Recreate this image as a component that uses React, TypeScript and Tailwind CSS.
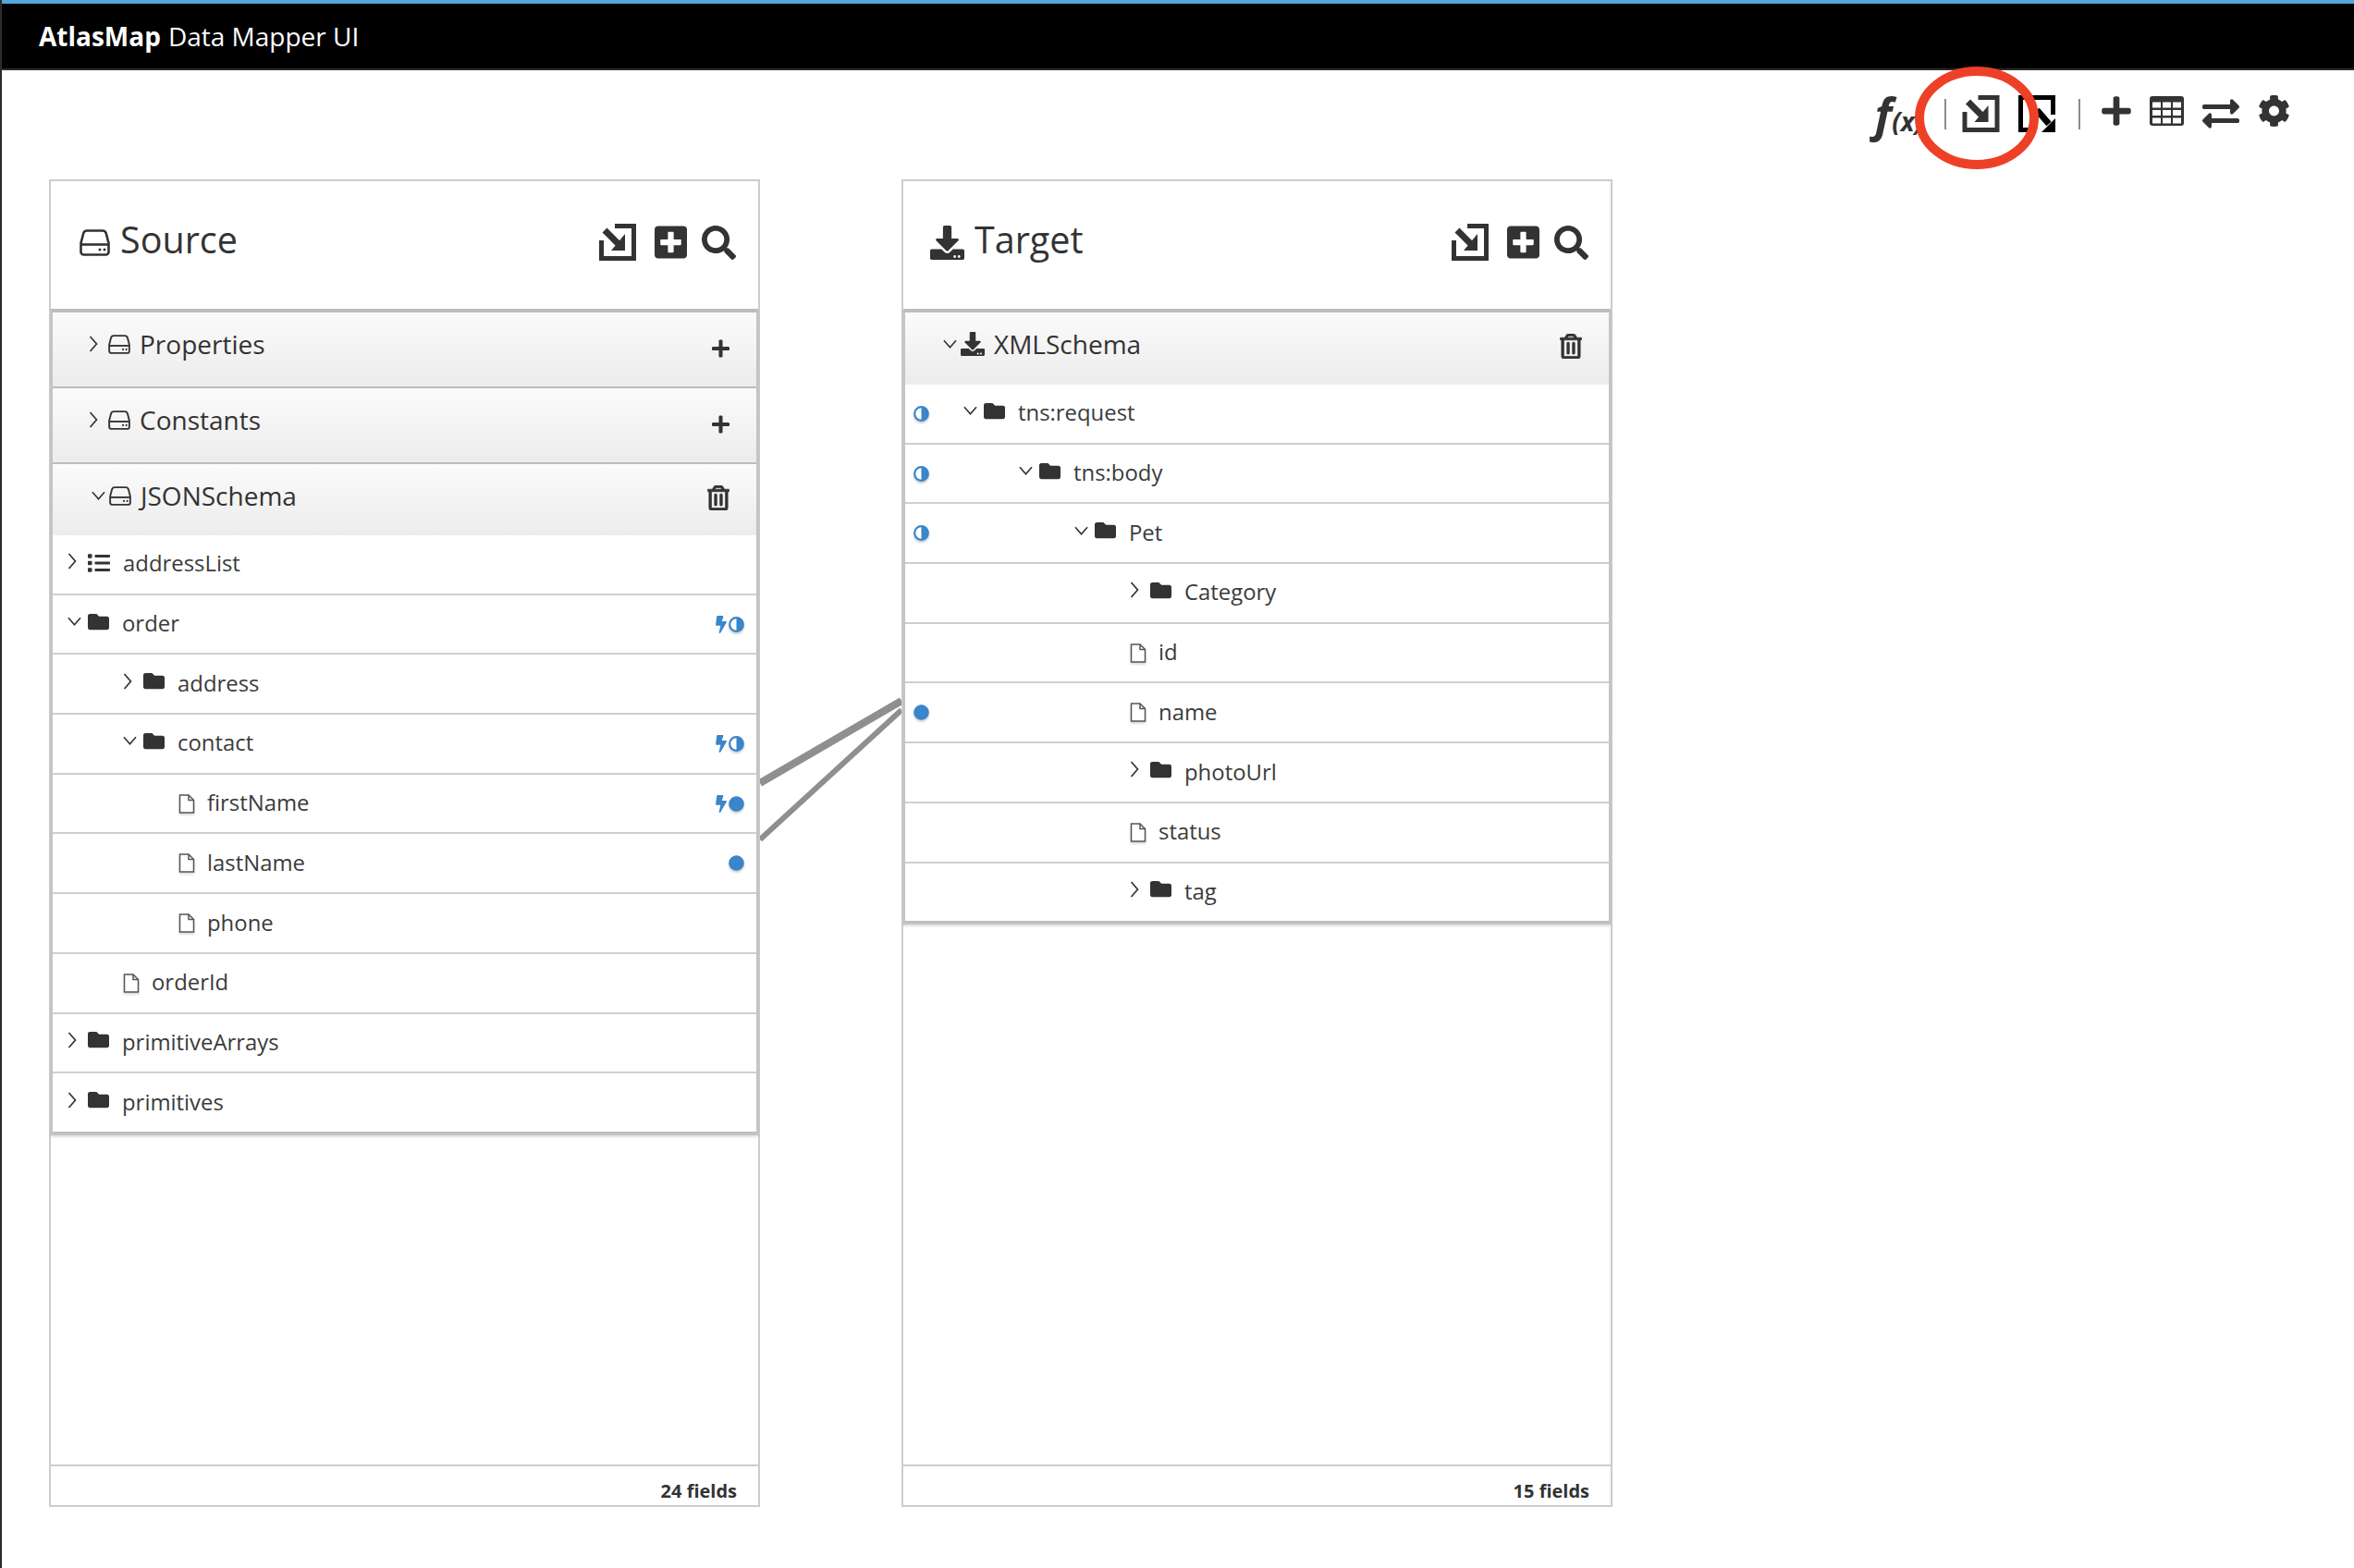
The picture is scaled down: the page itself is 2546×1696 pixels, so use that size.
import React from "react";
import {
  FaBolt,
  FaCircle,
  FaCog,
  FaDownload,
  FaExchangeAlt,
  FaFolder,
  FaList,
  FaPlus,
  FaPlusSquare,
  FaRegTrashAlt,
  FaSearch,
} from "react-icons/fa";

type Row = {
  label: string;
  depth: 0 | 1 | 2 | 3;
  kind: "folder" | "file" | "list";
  open?: boolean;
  link?: "half" | "full";
  bolt?: boolean;
};

const sourceRows: Row[] = [
  { label: "addressList", depth: 0, kind: "list" },
  { label: "order", depth: 0, kind: "folder", open: true, link: "half", bolt: true },
  { label: "address", depth: 1, kind: "folder" },
  { label: "contact", depth: 1, kind: "folder", open: true, link: "half", bolt: true },
  { label: "firstName", depth: 2, kind: "file", link: "full", bolt: true },
  { label: "lastName", depth: 2, kind: "file", link: "full" },
  { label: "phone", depth: 2, kind: "file" },
  { label: "orderId", depth: 1, kind: "file" },
  { label: "primitiveArrays", depth: 0, kind: "folder" },
  { label: "primitives", depth: 0, kind: "folder" },
];

const targetRows: Row[] = [
  { label: "tns:request", depth: 0, kind: "folder", open: true, link: "half" },
  { label: "tns:body", depth: 1, kind: "folder", open: true, link: "half" },
  { label: "Pet", depth: 2, kind: "folder", open: true, link: "half" },
  { label: "Category", depth: 3, kind: "folder" },
  { label: "id", depth: 3, kind: "file" },
  { label: "name", depth: 3, kind: "file", link: "full" },
  { label: "photoUrl", depth: 3, kind: "folder" },
  { label: "status", depth: 3, kind: "file" },
  { label: "tag", depth: 3, kind: "folder" },
];

const indent = ["w-0", "w-[60px]", "w-[120px]", "w-[180px]"];

function Chevron({ open }: { open?: boolean }) {
  if (open) {
    return (
      <svg viewBox="0 0 16 10" className="h-[10px] w-[15px]" fill="none" stroke="#333" strokeWidth="1.7">
        <path d="M1 1l7 8 7-8" />
      </svg>
    );
  }
  return (
    <svg viewBox="0 0 10 18" className="h-[18px] w-[10px]" fill="none" stroke="#333" strokeWidth="1.7">
      <path d="M1.5 1l7 8-7 8" />
    </svg>
  );
}

function HddIcon({ className }: { className: string }) {
  return (
    <svg viewBox="0 0 33 29" className={className}>
      <path
        d="M8 1.5H25a4 4 0 0 1 3.8 3L31.5 15V24.5a3 3 0 0 1-3 3H4.5a3 3 0 0 1-3-3V15L4.2 4.5A4 4 0 0 1 8 1.5z"
        fill="none"
        stroke="#333"
        strokeWidth="2.6"
      />
      <path d="M1.5 16.5H31.5" fill="none" stroke="#333" strokeWidth="2.6" />
      <circle cx="22" cy="22" r="1.5" fill="#333" />
      <circle cx="27" cy="22" r="1.5" fill="#333" />
    </svg>
  );
}

function FileIcon() {
  return (
    <svg viewBox="0 0 18 21" className="h-[21px] w-[18px] shrink-0 drop-shadow-[0_2px_1px_rgba(0,0,0,0.15)]">
      <path d="M1.5 1H11L16.5 6.5V20H1.5z" fill="#fff" stroke="#555" strokeWidth="1.5" />
      <path d="M11 1V6.5H16.5" fill="none" stroke="#555" strokeWidth="1.5" />
    </svg>
  );
}

function MappedIcon({ className }: { className: string }) {
  return (
    <svg viewBox="0 0 40 40" className={className}>
      <path d="M17 2.5H37.5V37.5H2.5V18" fill="none" stroke="#333" strokeWidth="5" />
      <path d="M6 7L22 23" fill="none" stroke="#333" strokeWidth="7" />
      <path d="M28 11V29H13z" fill="#333" />
    </svg>
  );
}

function UnmappedIcon({ className }: { className: string }) {
  return (
    <svg viewBox="0 0 40 40" className={className}>
      <path d="M37.5 21V2.5H2.5V37.5H14" fill="none" stroke="#000" strokeWidth="5" />
      <path d="M20 16L33 31" fill="none" stroke="#000" strokeWidth="7" />
      <path d="M40 25V40H25z" fill="#000" />
    </svg>
  );
}

function TableIcon() {
  return (
    <svg viewBox="0 0 37 32" className="h-[32px] w-[37px] -translate-y-[3px]">
      <rect width="37" height="32" rx="3" fill="#333" />
      {[6.5, 15, 23.5].map((y) =>
        [3, 14, 25].map((x) => <rect key={`${x}-${y}`} x={x} y={y} width="9" height="6" fill="#fff" />)
      )}
    </svg>
  );
}

function LinkDot({ kind }: { kind: "half" | "full" }) {
  if (kind === "full") {
    return <FaCircle className="h-[17px] w-[17px] text-[#3a85cb] drop-shadow-[0_2px_1px_rgba(0,0,0,0.2)]" />;
  }
  return (
    <svg viewBox="0 0 17 17" className="h-[17px] w-[17px] drop-shadow-[0_2px_1px_rgba(0,0,0,0.2)]">
      <circle cx="8.5" cy="8.5" r="7.3" fill="#fff" stroke="#3a85cb" strokeWidth="2.2" />
      <path d="M8.5 1.2a7.3 7.3 0 0 1 0 14.6z" fill="#3a85cb" />
    </svg>
  );
}

function TreeRow({ row, target, last }: { row: Row; target?: boolean; last?: boolean }) {
  return (
    <div
      className={`flex h-[64.7px] items-center border-b-2 text-[23.9px] text-[#3b3b3b] ${
        last ? "border-[#bdbdbd]" : "border-[#cfcfcf]"
      }`}
    >
      {target ? (
        <div className="flex w-[63px] shrink-0 pl-[9px]">{row.link && <LinkDot kind={row.link} />}</div>
      ) : (
        <div className="w-[16px] shrink-0" />
      )}
      <div className={`shrink-0 ${indent[row.depth]}`} />
      {row.kind === "file" ? (
        <div className="flex items-center gap-[13px]">
          <FileIcon />
          <span className="-translate-y-[1px]">{row.label}</span>
        </div>
      ) : (
        <div className="flex items-center">
          <div className="flex w-[22px] shrink-0 -translate-y-[3px] items-center">
            <Chevron open={row.open} />
          </div>
          {row.kind === "folder" ? (
            <FaFolder className="h-[23px] w-[23px] -translate-y-[3px] text-[#333]" />
          ) : (
            <FaList className="h-[24px] w-[24px] -translate-y-[1px] text-[#333]" />
          )}
          <span className="ml-[14px] -translate-y-[1px]">{row.label}</span>
        </div>
      )}
      {!target && (row.link || row.bolt) && (
        <div className="ml-auto flex items-center gap-[2px] pr-[13px]">
          {row.bolt && <FaBolt className="h-[19px] w-[12px] text-[#3a85cb]" />}
          {row.link && <LinkDot kind={row.link} />}
        </div>
      )}
    </div>
  );
}

function SectionHeader({
  label,
  icon,
  open,
  action,
  height,
  border,
  pad,
}: {
  label: string;
  icon: React.ReactNode;
  open?: boolean;
  action: React.ReactNode;
  height: string;
  border?: boolean;
  pad: string;
}) {
  return (
    <div
      className={`flex items-start bg-gradient-to-b from-[#fbfbfb] to-[#ececec] ${height} ${pad} pt-[15px] pr-[29px] ${
        border ? "border-b-2 border-[#bdbdbd]" : ""
      }`}
    >
      <div className="flex items-center text-[28px] leading-[38px] text-[#333]">
        <div className={`flex shrink-0 items-center ${open ? "w-[19px]" : "w-[21px]"}`}>
          <Chevron open={open} />
        </div>
        {icon}
        <span className="ml-[10px]">{label}</span>
      </div>
      <div className="ml-auto flex pt-[8px]">{action}</div>
    </div>
  );
}

function Panel({
  title,
  titleIcon,
  fields,
  children,
}: {
  title: string;
  titleIcon: React.ReactNode;
  fields: string;
  children: React.ReactNode;
}) {
  return (
    <div className="flex h-[1436px] w-[769px] shrink-0 flex-col border-2 border-[#cccccc]">
      <div className="flex h-[138px] shrink-0 items-center pr-[24px] pb-[6px] pl-[31px]">
        {titleIcon}
        <span className="ml-[11px] -translate-y-[2px] text-[39.5px] leading-none text-[#333]">{title}</span>
        <div className="ml-auto flex items-center gap-[16px]">
          <MappedIcon className="mr-[4px] h-[40px] w-[40px]" />
          <FaPlusSquare className="h-[40px] w-[35px] text-[#333]" />
          <FaSearch className="h-[37px] w-[37px] text-[#333]" />
        </div>
      </div>
      <div className="border-x-2 border-t-4 border-b-2 border-[#c4c4c4] border-t-[#bdbdbd] shadow-[0_2px_2px_rgba(0,0,0,0.12)]">
        {children}
      </div>
      <div className="mt-auto flex h-[44px] shrink-0 items-center justify-end border-t-2 border-[#cccccc] pt-[12px] pr-[23px] text-[20px] font-bold text-[#333]">
        {fields}
      </div>
    </div>
  );
}

function App() {
  const trash = <FaRegTrashAlt className="h-[27px] w-[24px] text-[#333] [stroke-width:14px]" />;
  const plus = <FaPlus className="mt-[5px] h-[22px] w-[19px] text-[#333]" />;
  const smallHdd = <HddIcon className="h-[21px] w-[24px]" />;

  return (
    <div className="relative min-h-screen border-l-2 border-[#2b2b2b] bg-white font-['Open_Sans','Noto_Sans',sans-serif]">
      <header className="flex h-[76px] items-center border-t-4 border-b-2 border-t-[#57a5d9] border-b-[#2b2b2b] bg-black pl-[40px] text-[28px] text-white">
        <span className="font-bold">AtlasMap</span>
        <span className="ml-[8px]">Data Mapper UI</span>
      </header>

      <div className="mb-[24px] flex h-[94px] items-center justify-end gap-[20px] pr-[69px]">
        <div className="flex items-baseline font-bold text-[#333] italic">
          <span className="text-[50px] leading-none">f</span>
          <span className="text-[28px] leading-none">(x)</span>
        </div>
        <div className="ml-[3px] h-[33px] w-[2px] bg-[#8c8c8c]" />
        <MappedIcon className="-ml-[3px] h-[40px] w-[41px]" />
        <UnmappedIcon className="h-[40px] w-[40px]" />
        <div className="ml-[5px] h-[33px] w-[2px] bg-[#8c8c8c]" />
        <FaPlus className="ml-[3px] h-[36px] w-[32px] -translate-y-[3px] text-[#333]" />
        <TableIcon />
        <FaExchangeAlt className="h-[40px] w-[40px] text-[#333]" />
        <FaCog className="h-[36px] w-[35px] -translate-y-[3px] text-[#333]" />
      </div>

      <div className="flex pl-[51px]">
        <Panel title="Source" titleIcon={<HddIcon className="h-[29px] w-[33px]" />} fields="24 fields">
          <SectionHeader label="Properties" icon={smallHdd} action={plus} height="h-[82px]" pad="pl-[39px]" border />
          <SectionHeader label="Constants" icon={smallHdd} action={plus} height="h-[82px]" pad="pl-[39px]" border />
          <SectionHeader label="JSONSchema" icon={smallHdd} action={trash} open height="h-[77px]" pad="pl-[42px]" />
          {sourceRows.map((row, i) => (
            <TreeRow key={row.label} row={row} last={i === sourceRows.length - 1} />
          ))}
        </Panel>

        <div className="w-[153px] shrink-0">
          <svg viewBox="0 0 153 170" className="mt-[556px] h-[170px] w-[153px]">
            <path d="M0 97L153 8" stroke="#8f8f8f" strokeWidth="8" fill="none" />
            <path d="M0 158L153 18" stroke="#8f8f8f" strokeWidth="6" fill="none" />
          </svg>
        </div>

        <Panel
          title="Target"
          titleIcon={<FaDownload className="-ml-[2px] h-[37px] w-[37px] text-[#333]" />}
          fields="15 fields"
        >
          <SectionHeader
            label="XMLSchema"
            icon={<FaDownload className="h-[26px] w-[26px] text-[#333]" />}
            action={trash}
            open
            height="h-[78px]"
            pad="pl-[41px]"
          />
          {targetRows.map((row, i) => (
            <TreeRow key={row.label} row={row} target last={i === targetRows.length - 1} />
          ))}
        </Panel>
      </div>

      {/* annotation drawn over the toolbar */}
      <svg viewBox="0 0 146 122" className="absolute top-[66px] left-[2063px] h-[122px] w-[146px]">
        <ellipse cx="73" cy="61.5" rx="62" ry="50.5" fill="none" stroke="#ee4027" strokeWidth="10" />
      </svg>
    </div>
  );
}

export default App;
